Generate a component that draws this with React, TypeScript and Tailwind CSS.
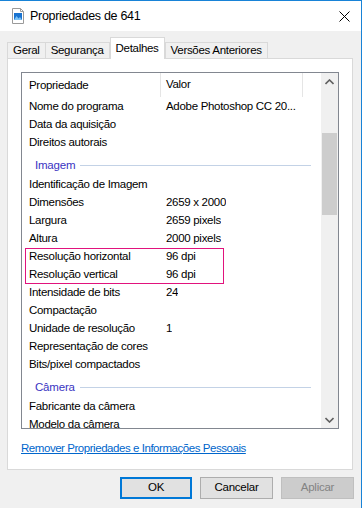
const font = "font-['Segoe_UI','Liberation_Sans',Arial,sans-serif]";

type Row = { name: string; value?: string };

const firstRows: Row[] = [
  { name: "Nome do programa", value: "Adobe Photoshop CC 20..." },
  { name: "Data da aquisição" },
  { name: "Direitos autorais" },
];

const imageRows: Row[] = [
  { name: "Identificação de Imagem" },
  { name: "Dimensões", value: "2659 x 2000" },
  { name: "Largura", value: "2659 pixels" },
  { name: "Altura", value: "2000 pixels" },
];

const resolutionRows: Row[] = [
  { name: "Resolução horizontal", value: "96 dpi" },
  { name: "Resolução vertical", value: "96 dpi" },
];

const moreImageRows: Row[] = [
  { name: "Intensidade de bits", value: "24" },
  { name: "Compactação" },
  { name: "Unidade de resolução", value: "1" },
  { name: "Representação de cores" },
  { name: "Bits/pixel compactados" },
];

const cameraRows: Row[] = [
  { name: "Fabricante da câmera" },
  { name: "Modelo da câmera" },
];

function PropRow({ row }: { row: Row }) {
  return (
    <div className="flex h-[18px] shrink-0 items-center pt-[2px] text-[11.5px] tracking-[-0.3px] text-black">
      <span className="w-[138px] shrink-0 truncate pl-[7px]">{row.name}</span>
      <span className="truncate pl-[6px]">{row.value}</span>
    </div>
  );
}

function Group({ label }: { label: string }) {
  return (
    <div className="flex h-[24px] shrink-0 items-center pt-[5px] pl-[13px] pr-[10px]">
      <span className="text-[11.5px] tracking-[-0.2px] text-[#3a34c2]">{label}</span>
      <span className="ml-[5px] h-px flex-1 bg-[#c3d2e6]" />
    </div>
  );
}

function ImageIcon() {
  return (
    <svg width="14" height="16" viewBox="0 0 14 16">
      <path d="M1.5 0.5h8l3 3v12h-11z" fill="#fff" stroke="#9a9a9a" />
      <path d="M9.5 0.5v3h3" fill="none" stroke="#9a9a9a" />
      <rect x="3" y="5" width="8" height="7" fill="#1a73d0" />
      <path d="M3 12l2.5-4 2 2.5 1.5-1.5 2 3z" fill="#7ec3f5" />
    </svg>
  );
}

function Tab({ label, selected }: { label: string; selected?: boolean }) {
  if (selected) {
    return (
      <div className="relative z-10 -mb-px flex h-[22px] items-start border border-b-0 border-[#d9d9d9] bg-white px-[5px] pt-[2px] text-[11.5px] tracking-[-0.3px]">
        {label}
      </div>
    );
  }
  return (
    <div className="flex h-[16px] items-center border border-b-0 border-[#d9d9d9] bg-[#f0f0f0] px-[5px] text-[11.5px] tracking-[-0.3px] first:border-r-0">
      {label}
    </div>
  );
}

export default function App() {
  return (
    <div
      className={`${font} flex h-[508px] w-[362px] flex-col border-t border-r border-[#1883d7] bg-[#f0f0f0] text-black`}
    >
      <div className="flex h-[30px] shrink-0 items-center bg-white pl-[11px] pr-[10px]">
        <ImageIcon />
        <span className="ml-[5px] text-[12.5px] leading-none tracking-[-0.3px]">Propriedades de 641</span>
        <svg className="ml-auto mr-[1px]" width="11" height="11" viewBox="0 0 11 11">
          <path d="M0.5 0.5l10 10M10.5 0.5l-10 10" stroke="#000" strokeWidth="1" />
        </svg>
      </div>

      <div className="mt-[6px] flex items-end pl-[7px]">
        <Tab label="Geral" />
        <Tab label="Segurança" />
        <Tab label="Detalhes" selected />
        <Tab label="Versões Anteriores" />
      </div>

      <div className="ml-[7px] flex h-[412px] w-[346px] flex-col border border-[#d9d9d9] bg-white">
        <div className="ml-[13px] mt-[13px] flex h-[357px] w-[318px] border border-[#828790] bg-white">
          <div className="flex min-w-0 flex-1 flex-col overflow-hidden">
            <div className="flex h-[24px] shrink-0 items-center text-[11.5px] tracking-[-0.3px]">
              <span className="w-[138px] shrink-0 self-stretch pl-[7px] leading-[24px]">Propriedade</span>
              <span className="h-full w-px bg-[#e5e5e5]" />
              <span className="w-[141px] pl-[5px]">Valor</span>
              <span className="h-full w-px bg-[#e5e5e5]" />
            </div>
            {firstRows.map((r) => (
              <PropRow key={r.name} row={r} />
            ))}
            <Group label="Imagem" />
            {imageRows.map((r) => (
              <PropRow key={r.name} row={r} />
            ))}
            <div className="relative">
              {resolutionRows.map((r) => (
                <PropRow key={r.name} row={r} />
              ))}
              <span className="absolute left-[3px] top-[1px] h-[36px] w-[199px] border border-[#e1137d]" />
            </div>
            {moreImageRows.map((r) => (
              <PropRow key={r.name} row={r} />
            ))}
            <Group label="Câmera" />
            {cameraRows.map((r) => (
              <PropRow key={r.name} row={r} />
            ))}
          </div>

          <div className="flex w-[17px] shrink-0 flex-col bg-[#f0f0f0]">
            <div className="flex h-[17px] items-center justify-center">
              <svg width="9" height="6" viewBox="0 0 9 6">
                <path d="M0.5 5l4-4 4 4" fill="none" stroke="#606060" strokeWidth="1.6" />
              </svg>
            </div>
            <div className="mt-[43px] mx-px h-[82px] bg-[#cdcdcd]" />
            <div className="mt-auto flex h-[17px] items-center justify-center">
              <svg width="9" height="6" viewBox="0 0 9 6">
                <path d="M0.5 1l4 4 4-4" fill="none" stroke="#606060" strokeWidth="1.6" />
              </svg>
            </div>
          </div>
        </div>

        <a className="ml-[13px] mt-[11px] w-fit text-[11.5px] tracking-[-0.45px] text-[#0066cc] underline" href="#">
          Remover Propriedades e Informações Pessoais
        </a>
      </div>

      <div className="mt-[7px] flex justify-end gap-[8px] pr-[7px]">
        <button className="h-[22px] w-[72px] border-2 border-[#0078d7] bg-[#e1e1e1] text-[11.5px] tracking-[-0.25px]">
          OK
        </button>
        <button className="h-[22px] w-[73px] border border-[#adadad] bg-[#e1e1e1] text-[11.5px] tracking-[-0.25px]">
          Cancelar
        </button>
        <button className="h-[22px] w-[73px] border border-[#bfbfbf] bg-[#cccccc] text-[11.5px] tracking-[-0.25px] text-[#838383]">
          Aplicar
        </button>
      </div>
    </div>
  );
}
